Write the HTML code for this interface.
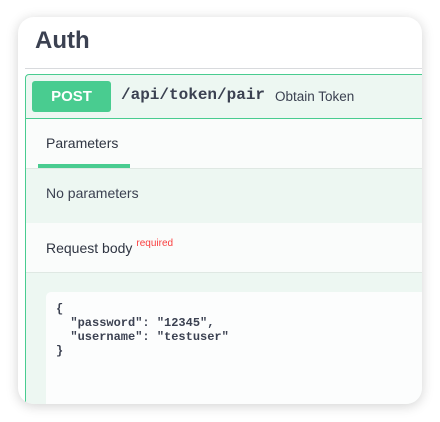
<!DOCTYPE html>
<html><head><meta charset="utf-8"><style>
*{margin:0;padding:0;box-sizing:border-box}
html,body{width:440px;height:422px;overflow:hidden}
body{background:#fff;position:relative;font-family:"Liberation Sans",sans-serif;color:#3b4151}
.card{position:absolute;left:18px;top:17px;width:404px;height:387px;border-radius:16px;background:#fff;box-shadow:0 2px 12px rgba(0,0,0,.18);overflow:hidden}
.h{position:absolute;left:17px;top:10px;font-size:24px;font-weight:bold;color:#3b4151}
.hr{position:absolute;left:7px;top:51px;right:0;height:1px;background:#d8dadd}
.op{position:absolute;left:7px;top:57px;width:410px;height:340px;border:1px solid #49cc90;border-radius:4px;background:#edf7f2}
.sum{position:absolute;left:0;top:0;right:0;height:44px;border-bottom:1px solid #49cc90}
.post{position:absolute;left:6px;top:6px;width:79px;height:31px;background:#49cc90;border-radius:3px;color:#fff;font-weight:bold;font-size:15px;text-align:center;line-height:31px}
.path{position:absolute;left:95px;top:11px;font-family:"Liberation Mono",monospace;font-weight:bold;font-size:16px;color:#3b4151}
.desc{position:absolute;left:249px;top:14px;font-size:13.5px}
.sec1{position:absolute;left:0;top:44px;right:0;height:50px;background:#fafcfb;border-bottom:1px solid #dfe8e3}
.tab{position:absolute;left:20px;top:16px;font-size:14px;color:#2f3542}
.ul{position:absolute;left:12px;top:45px;width:92px;height:4px;background:#49cc90}
.np{position:absolute;left:20px;top:110px;font-size:14px}
.sec2{position:absolute;left:0;top:148px;right:0;height:50px;background:#fafcfb;border-bottom:1px solid #dfe8e3}
.rb{position:absolute;left:20px;top:17px;font-size:14px;color:#2f3542}
.rq{font-size:10px;color:#f93e3e;position:relative;top:-7px;margin-left:4px}
.code{position:absolute;left:20px;top:217px;width:390px;height:130px;background:#fcfdfd;border-radius:5px;padding:10px 10px;font-family:"Liberation Mono",monospace;font-weight:bold;font-size:12px;line-height:14px;white-space:pre;color:#3b4151}
</style></head><body>
<div class="card">
<div class="h">Auth</div>
<div class="hr"></div>
<div class="op">
 <div class="sum"><div class="post">POST</div><div class="path">/api/token/pair</div><div class="desc">Obtain Token</div></div>
 <div class="sec1"><div class="tab">Parameters</div><div class="ul"></div></div>
 <div class="np">No parameters</div>
 <div class="sec2"><div class="rb">Request body<span class="rq">required</span></div></div>
 <div class="code">{
  "password": "12345",
  "username": "testuser"
}</div>
</div>
</div>
</body></html>
